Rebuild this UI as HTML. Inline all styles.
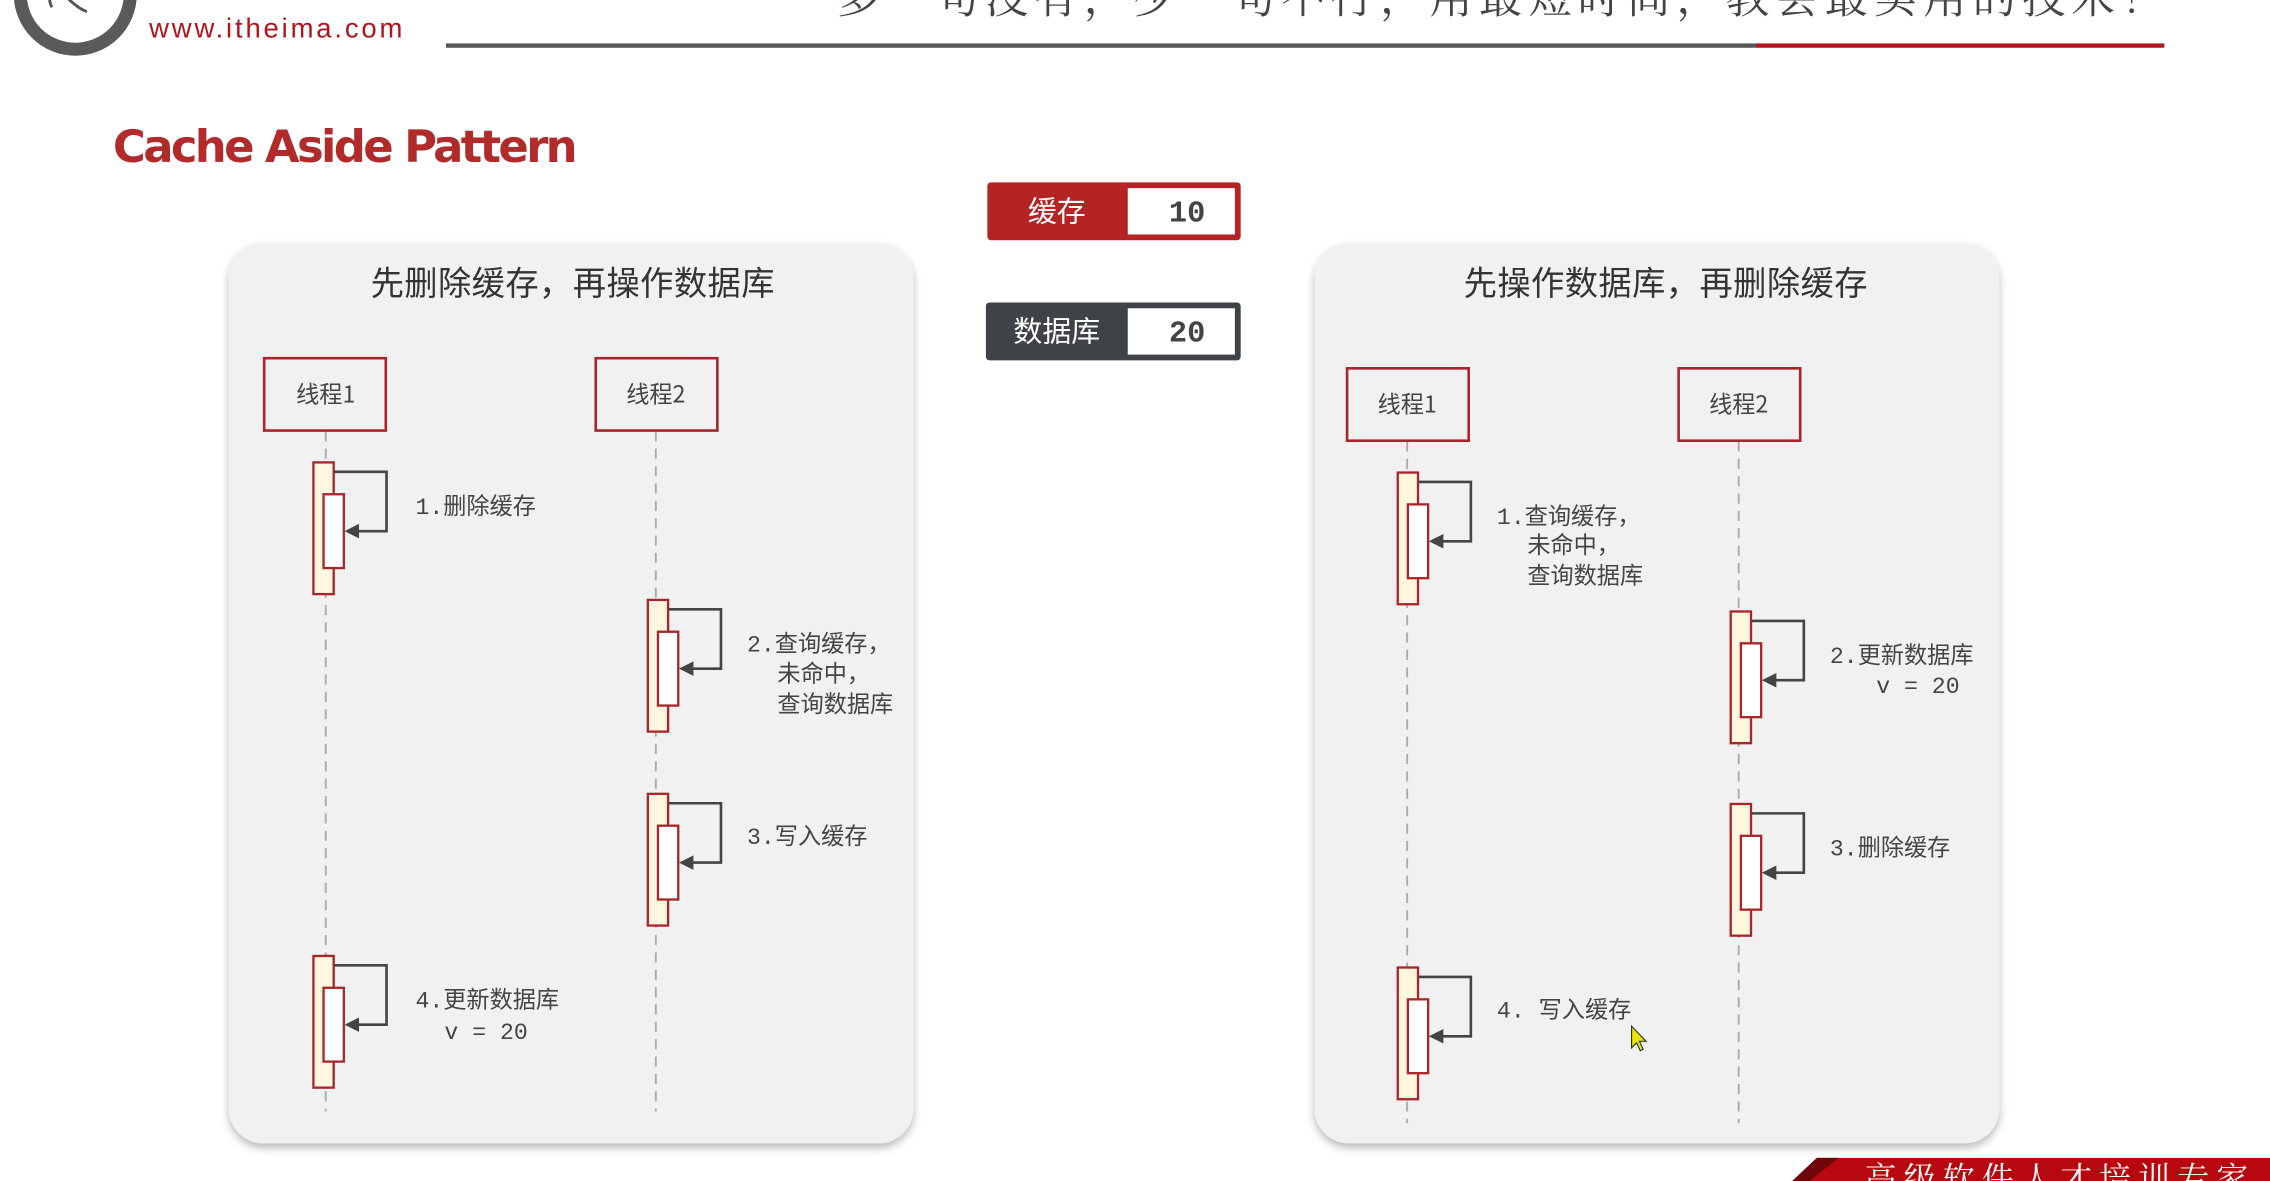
<!DOCTYPE html>
<html><head><meta charset="utf-8"><style>
html,body{margin:0;padding:0;background:#fff;overflow:hidden}
svg{display:block}
</style></head><body>
<svg width="2270" height="1181" viewBox="0 0 1568 816" preserveAspectRatio="none" xmlns="http://www.w3.org/2000/svg">
<defs>
<filter id="sh" x="-5%" y="-5%" width="110%" height="110%"><feDropShadow dx="0" dy="3" stdDeviation="3" flood-color="#000" flood-opacity="0.28"/></filter>
<g id="act">
  <rect x="0.5" y="0.5" width="14" height="91" fill="#fdf7dd" stroke="#a8262b" stroke-width="1.6"/>
  <rect x="7.5" y="22.5" width="14" height="51" fill="#fff" stroke="#a8262b" stroke-width="1.6"/>
  <path d="M15 7 H51 V48 H30" fill="none" stroke="#444" stroke-width="1.8"/>
  <polygon points="22,48 32,43 32,53" fill="#444"/>
</g>
</defs>
<rect width="1568" height="816" fill="#fff"/>
<!-- logo -->
<circle cx="52" cy="-4" r="38" fill="none" stroke="#5a5a5a" stroke-width="9"/>
<path d="M36 5 q-4 -6 2 -12 M46 -2 q8 8 14 10" fill="none" stroke="#555" stroke-width="2"/>
<text x="104" y="-3" font-family="'Liberation Sans','Noto Sans CJK SC',sans-serif" font-size="24" font-weight="bold" fill="#333">黑马程序员</text>
<text x="103" y="26" font-family="'Liberation Sans',sans-serif" font-size="19" fill="#b0141c" textLength="175">www.itheima.com</text>
<!-- header slogan -->
<text x="578" y="9" font-family="'Noto Serif CJK SC','Liberation Serif',serif" font-size="30" fill="#444" textLength="917">多一句没有，少一句不行，用最短时间，教会最实用的技术！</text>
<rect x="308" y="30" width="905" height="3" fill="#555"/>
<rect x="1213" y="30" width="282" height="3" fill="#b0141c"/>
<!-- title -->
<text x="78" y="112" font-family="'DejaVu Sans','Liberation Sans',sans-serif" font-size="31" font-weight="bold" fill="#b22b2b" textLength="321">Cache Aside Pattern</text>
<!-- cache / db -->
<rect x="682.5" y="126.5" width="174" height="39" rx="2" fill="#b42424" stroke="#b42424"/>
<rect x="779" y="130" width="74" height="32" fill="#fff"/>
<text x="730" y="153" text-anchor="middle" font-family="'Noto Sans CJK SC',sans-serif" font-size="20" fill="#fff">缓存</text>
<text x="820" y="153" text-anchor="middle" font-family="'Liberation Mono',monospace" font-size="21" font-weight="bold" fill="#444">10</text>
<rect x="681.5" y="209.5" width="175" height="39" rx="2" fill="#3f4347" stroke="#3f4347"/>
<rect x="779" y="213" width="74" height="32" fill="#fff"/>
<text x="730" y="236" text-anchor="middle" font-family="'Noto Sans CJK SC',sans-serif" font-size="20" fill="#fff">数据库</text>
<text x="820" y="236" text-anchor="middle" font-family="'Liberation Mono',monospace" font-size="21" font-weight="bold" fill="#444">20</text>

<g font-family="'Liberation Mono','Noto Sans CJK SC',monospace" fill="#444">
<!-- left panel -->
<rect x="158" y="168" width="473" height="622" rx="24" fill="#f1f1f1" filter="url(#sh)"/>
<text x="256" y="204" font-family="'Noto Sans CJK SC',sans-serif" font-size="23" fill="#333" textLength="279">先删除缓存，再操作数据库</text>
<line x1="225" y1="298" x2="225" y2="768" stroke="#aaa" stroke-width="1.3" stroke-dasharray="7,5"/>
<line x1="453" y1="298" x2="453" y2="768" stroke="#aaa" stroke-width="1.3" stroke-dasharray="7,5"/>
<rect x="182.5" y="247.5" width="84" height="50" fill="#f1f1f1" stroke="#a8262b" stroke-width="1.8"/>
<rect x="411.5" y="247.5" width="84" height="50" fill="#f1f1f1" stroke="#a8262b" stroke-width="1.8"/>
<text x="225" y="278" text-anchor="middle" font-size="16" font-family="'Noto Sans CJK SC',sans-serif">线程1</text>
<text x="453" y="278" text-anchor="middle" font-size="16" font-family="'Noto Sans CJK SC',sans-serif">线程2</text>
<use href="#act" x="216" y="319"/>
<use href="#act" x="447" y="414"/>
<use href="#act" x="447" y="548"/>
<use href="#act" x="216" y="660"/>
<g font-size="16">
<text x="287" y="355">1.删除缓存</text>
<text x="516" y="450">2.查询缓存，</text>
<text x="537" y="471">未命中，</text>
<text x="537" y="492">查询数据库</text>
<text x="516" y="583">3.写入缓存</text>
<text x="287" y="696">4.更新数据库</text>
<text x="307" y="718" xml:space="preserve">v = 20</text>
</g>

<!-- right panel -->
<rect x="908" y="168" width="473" height="622" rx="24" fill="#f1f1f1" filter="url(#sh)"/>
<text x="1011" y="204" font-family="'Noto Sans CJK SC',sans-serif" font-size="23" fill="#333" textLength="279">先操作数据库，再删除缓存</text>
<line x1="972" y1="305" x2="972" y2="776" stroke="#aaa" stroke-width="1.3" stroke-dasharray="7,5"/>
<line x1="1201" y1="305" x2="1201" y2="776" stroke="#aaa" stroke-width="1.3" stroke-dasharray="7,5"/>
<rect x="930.5" y="254.5" width="84" height="50" fill="#f1f1f1" stroke="#a8262b" stroke-width="1.8"/>
<rect x="1159.5" y="254.5" width="84" height="50" fill="#f1f1f1" stroke="#a8262b" stroke-width="1.8"/>
<text x="972" y="285" text-anchor="middle" font-size="16" font-family="'Noto Sans CJK SC',sans-serif">线程1</text>
<text x="1201" y="285" text-anchor="middle" font-size="16" font-family="'Noto Sans CJK SC',sans-serif">线程2</text>
<use href="#act" x="965" y="326"/>
<use href="#act" x="1195" y="422"/>
<use href="#act" x="1195" y="555"/>
<use href="#act" x="965" y="668"/>
<g font-size="16">
<text x="1034" y="362">1.查询缓存，</text>
<text x="1055" y="382">未命中，</text>
<text x="1055" y="403">查询数据库</text>
<text x="1264" y="458">2.更新数据库</text>
<text x="1296" y="479" xml:space="preserve">v = 20</text>
<text x="1264" y="591">3.删除缓存</text>
<text x="1034" y="703" xml:space="preserve">4. 写入缓存</text>
</g>
</g>
<!-- cursor -->
<path d="M1127 709 L1127 724 L1130.5 720.5 L1133 726 L1135 725 L1132.5 719.5 L1137 719.5 Z" fill="#e6e600" stroke="#333" stroke-width="0.8"/>
<!-- bottom banner -->
<polygon points="1255,800 1568,800 1568,816 1238,816" fill="#b8080f"/>
<polygon points="1255,800 1270,800 1250,816 1238,816" fill="#6e0508"/>
<text x="1288" y="822" font-family="'Noto Serif CJK SC',serif" font-size="22" fill="#fff" textLength="265">高级软件人才培训专家</text>
</svg>
</body></html>
